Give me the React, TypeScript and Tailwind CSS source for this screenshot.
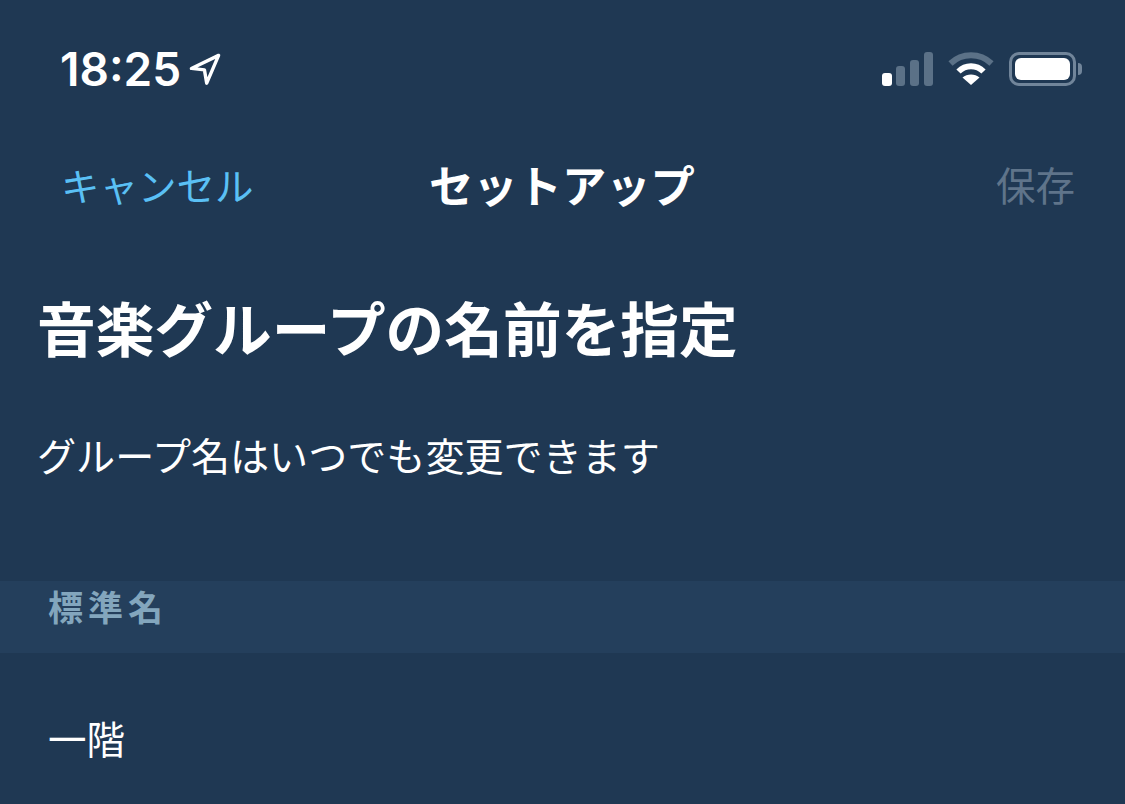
const FONT = "font-['Inter','Noto_Sans_CJK_JP',sans-serif]";

function LocationArrow() {
  return (
    <svg viewBox="0 0 30 30" className="w-[34px] h-[34px] ml-[7px] -mt-[1px]" fill="none">
      <path d="M27 3 L3 14.5 L14.5 15.8 L16.5 27.5 Z" stroke="#fff" strokeWidth="3" strokeLinejoin="round" />
    </svg>
  );
}

function Signal() {
  return (
    <svg viewBox="0 0 52 34" className="w-[52px] h-[34px]">
      <rect x="1" y="21" width="10" height="13" rx="3" fill="#fff" />
      <rect x="15" y="14" width="9" height="20" rx="3" fill="#5b7187" />
      <rect x="29" y="8" width="9" height="26" rx="3" fill="#5b7187" />
      <rect x="43" y="0" width="9" height="34" rx="3" fill="#5b7187" />
    </svg>
  );
}

function Wifi() {
  return (
    <svg viewBox="0 0 46 34" className="w-[46px] h-[34px] ml-[15px]" fill="none">
      <path d="M2.5 11.5 C14 0.5 32 0.5 43.5 11.5" stroke="#5b7187" strokeWidth="6" />
      <path d="M10.5 19.5 C17.5 12.5 28.5 12.5 35.5 19.5" stroke="#fff" strokeWidth="6" />
      <path d="M23 33 L14.5 25.5 C19 21.5 27 21.5 31.5 25.5 Z" fill="#fff" strokeLinejoin="round" />
    </svg>
  );
}

function Battery() {
  return (
    <div className="flex items-center ml-[15px]">
      <div className="w-[67px] h-[34px] rounded-[10px] border-[3px] border-[#71859a] p-[3px]">
        <div className="w-full h-full rounded-[6px] bg-white" />
      </div>
      <div className="w-[4px] h-[12px] ml-[2px] rounded-r-[4px] bg-[#71859a]" />
    </div>
  );
}

export default function App() {
  return (
    <div className={`${FONT} w-[1125px] h-[804px] overflow-hidden bg-[#1f3853] text-white`}>
      {/* Status bar */}
      <div className="flex items-center justify-between h-[70px] pt-[34px] box-content pl-[60px] pr-[43px]">
        <div className="flex items-center">
          <span className="text-[46px] leading-[50px] font-semibold font-['Inter',sans-serif]">18:25</span>
          <LocationArrow />
        </div>
        <div className="flex items-center">
          <Signal />
          <Wifi />
          <Battery />
        </div>
      </div>

      {/* Nav */}
      <div className="grid grid-cols-[368px_auto_1fr] items-center h-[50px] mt-[58px] pl-[61px] pr-[50px]">
        <span className="text-[38.5px] leading-[50px] text-[#5ac0f5]">キャンセル</span>
        <span className="text-[44.3px] leading-[50px] font-bold">セットアップ</span>
        <span className="text-[39.5px] leading-[50px] text-[#5f748a] text-right">保存</span>
      </div>

      {/* Heading */}
      <div className="pl-[37px]">
        <h1 className="text-[58.7px] leading-[70px] font-bold mt-[84px]">音楽グループの名前を指定</h1>
        <p className="text-[39.1px] leading-[50px] mt-[66px]">グループ名はいつでも変更できます</p>
      </div>

      {/* Section */}
      <div className="h-[72px] mt-[99px] bg-[#243f5c] pl-[48px] pt-[3px]">
        <span className="text-[35px] leading-[48px] font-bold tracking-[5px] text-[#83a6bd]">標準名</span>
      </div>

      {/* Row */}
      <div className="pl-[48px] pt-[62px]">
        <span className="text-[38.5px] leading-[50px]">一階</span>
      </div>
    </div>
  );
}
